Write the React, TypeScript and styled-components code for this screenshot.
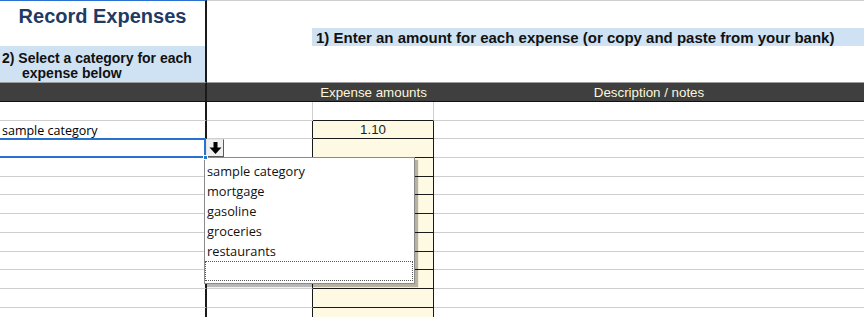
import styled, { createGlobalStyle } from 'styled-components';

const GlobalStyle = createGlobalStyle`
  html, body {
    margin: 0;
    padding: 0;
    background: #fff;
  }
  body {
    overflow: hidden;
    font-family: "Liberation Sans", Arial, sans-serif;
  }
`;

const GRID = '#cfcfcf';
const INK = '#1a1a1a';
const SELECT = '#2a72d0';

const Sheet = styled.div`
  display: grid;
  grid-template-columns: 207px 106px 121px 1fr;
  grid-template-rows: 28px 18px 36px 20px repeat(12, 18.7px);
  width: 864px;
  height: 317px;
  overflow: hidden;
`;

const Title = styled.div`
  grid-column: 1;
  grid-row: 1 / 3;
  box-sizing: border-box;
  border-top: 1px solid ${SELECT};
  border-right: 2px solid ${INK};
  padding-top: 5px;
  text-align: center;
  font-size: 20px;
  line-height: 20px;
  font-weight: 700;
  color: #1f3b64;
`;

const Blank = styled.div<{ $col: string; $row: string; $top?: boolean }>`
  grid-column: ${(p) => p.$col};
  grid-row: ${(p) => p.$row};
  border-top: ${(p) => (p.$top ? `1px solid ${GRID}` : 'none')};
`;

const EnterBand = styled.div`
  grid-column: 3 / 5;
  grid-row: 2;
  margin-left: -1px;
  padding: 0 0 0 4px;
  background: #cfe2f3;
  font-size: 15px;
  line-height: 19px;
  font-weight: 700;
  color: #111;
  white-space: nowrap;
`;

const SelectBand = styled.div`
  grid-column: 1;
  grid-row: 3;
  border-right: 2px solid ${INK};
  padding: 5px 0 0 2px;
  background: #cfe2f3;
  font-size: 14px;
  line-height: 15px;
  font-weight: 700;
  color: #111;
`;

const Indent = styled.span`
  display: block;
  padding-left: 20px;
`;

const HeaderCell = styled.div<{ $first?: boolean }>`
  grid-row: 4;
  background: #3f3f3f;
  border-top: 1px solid #9c9c9c;
  border-bottom: 1px solid #111;
  border-right: ${(p) => (p.$first ? `2px solid ${INK}` : 'none')};
  padding-top: 1px;
  text-align: center;
  font-size: 13.33px;
  line-height: 18px;
  color: #fbf7dc;
  white-space: nowrap;
`;

const CategoryCell = styled.div<{ $selected?: boolean }>`
  position: relative;
  z-index: ${(p) => (p.$selected ? 5 : 'auto')};
  border-right: 2px solid ${INK};
  border-bottom: 1px solid ${GRID};
  padding-left: 2px;
  font-family: "Open Sans", "Noto Sans", sans-serif;
  font-size: 12.5px;
  line-height: 20px;
  color: #000;
  white-space: nowrap;

  ${(p) =>
    p.$selected &&
    `
    &::after {
      content: '';
      position: absolute;
      top: -1px;
      left: -3px;
      right: -1px;
      bottom: -1px;
      border: 2px solid ${SELECT};
      pointer-events: none;
    }
  `}
`;

const Handle = styled.span`
  position: absolute;
  right: -3px;
  bottom: -3px;
  width: 5px;
  height: 5px;
  background: ${SELECT};
  border: 1px solid #fff;
  box-sizing: border-box;
  z-index: 2;
`;

const PlainCell = styled.div<{ $right?: string; $bottom: string; $bg?: string }>`
  background: ${(p) => p.$bg || '#fff'};
  border-right: ${(p) => (p.$right ? `1px solid ${p.$right}` : 'none')};
  border-bottom: 1px solid ${(p) => p.$bottom};
  text-align: center;
  font-size: 13.33px;
  line-height: 18px;
  color: #1c1c2a;
`;

const DropButton = styled.div`
  position: absolute;
  top: 0;
  left: calc(100% + 1px);
  width: 18px;
  height: 18px;
  box-sizing: border-box;
  background: #f0f0f0;
  border: 1px solid;
  border-color: #e6e6e6 #5c5c5c #5c5c5c #e6e6e6;
  display: flex;
  align-items: center;
  justify-content: center;
`;

const DropList = styled.div`
  position: absolute;
  top: 100%;
  left: calc(100% - 1px);
  width: 211px;
  box-sizing: border-box;
  background: #fff;
  border: 1px solid #8a8a8a;
  padding: 3px 0 2px;
  box-shadow: 3px 3px 1px rgba(0, 0, 0, 0.28);
`;

const Option = styled.div<{ $focus?: boolean }>`
  height: ${(p) => (p.$focus ? '20px' : '20px')};
  box-sizing: border-box;
  margin: ${(p) => (p.$focus ? '0 1px 0 0' : '0')};
  border: ${(p) => (p.$focus ? '1px dotted #555' : 'none')};
  padding-left: 2px;
  font-family: "Open Sans", "Noto Sans", sans-serif;
  font-size: 12.8px;
  line-height: 20px;
  color: #111;
`;

const options = ['sample category', 'mortgage', 'gasoline', 'groceries', 'restaurants'];

const rows = Array.from({ length: 12 }, (_, i) => i);

function ArrowDown() {
  return (
    <svg width="13" height="13" viewBox="0 0 13 13">
      <rect x="4.5" y="0" width="4" height="6" fill="#000" />
      <polygon points="0.5,5.5 12.5,5.5 6.5,12" fill="#000" />
    </svg>
  );
}

export default function App() {
  return (
    <>
      <GlobalStyle />
      <Sheet>
        <Title>Record Expenses</Title>
        <Blank $col="2" $row="1 / 4" $top />
        <Blank $col="3 / 5" $row="1" $top />
        <EnterBand>1) Enter an amount for each expense (or copy and paste from your bank)</EnterBand>
        <SelectBand>
          2) Select a category for each
          <Indent>expense below</Indent>
        </SelectBand>
        <Blank $col="3 / 5" $row="3" />

        <HeaderCell $first />
        <HeaderCell />
        <HeaderCell>Expense amounts</HeaderCell>
        <HeaderCell>Description / notes</HeaderCell>

        {rows.map((i) => {
          const yellow = i > 0;
          const edge = yellow ? INK : GRID;
          return [
            <CategoryCell key={`a${i}`} $selected={i === 2}>
              {i === 1 && 'sample category'}
              {i === 2 && (
                <>
                  <Handle />
                  <DropButton>
                    <ArrowDown />
                  </DropButton>
                  <DropList>
                    {options.map((o) => (
                      <Option key={o}>{o}</Option>
                    ))}
                    <Option $focus />
                  </DropList>
                </>
              )}
            </CategoryCell>,
            <PlainCell key={`b${i}`} $right={edge} $bottom={GRID} />,
            <PlainCell key={`c${i}`} $right={edge} $bottom={INK} $bg={yellow ? '#fdf9e2' : '#fff'}>
              {i === 1 && '1.10'}
            </PlainCell>,
            <PlainCell key={`d${i}`} $bottom={GRID} />,
          ];
        })}
      </Sheet>
    </>
  );
}
